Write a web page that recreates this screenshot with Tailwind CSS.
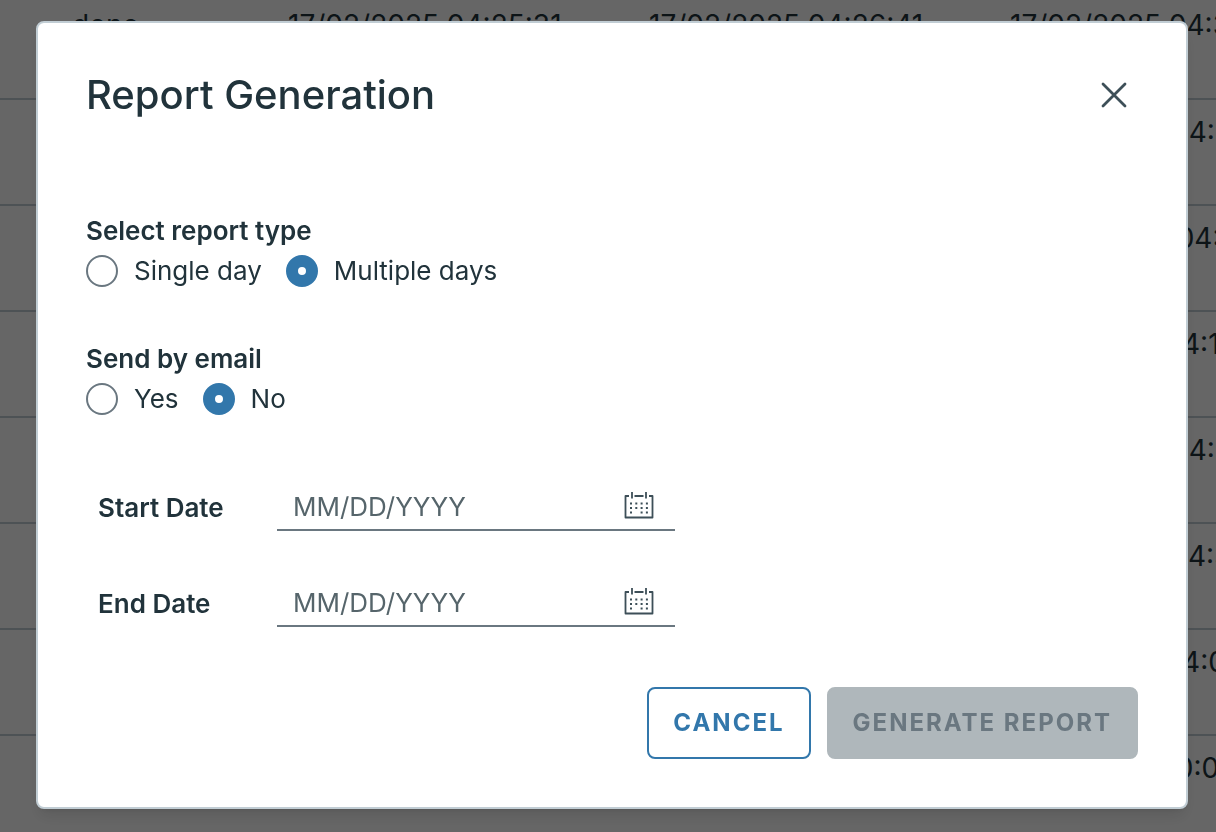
<!DOCTYPE html>
<html lang="en">
<head>
  <meta charset="UTF-8">
  <meta name="viewport" content="width=device-width, initial-scale=1.0">
  <title>Report Generation</title>
  <script src="https://cdn.jsdelivr.net/npm/@tailwindcss/browser@4"></script>
</head>
<body class="h-screen overflow-hidden bg-white font-['Inter',sans-serif] text-[26px] text-[#21333b]">

  <!-- Jobs table behind the dialog -->
  <div class="h-full overflow-hidden">
    <table class="-mt-[7px] w-[1400px] table-fixed text-left text-[28px] leading-8">
      <colgroup>
        <col class="w-[264px]"><col class="w-[361px]"><col class="w-[361px]"><col>
      </colgroup>
      <tbody id="jobs"></tbody>
    </table>
  </div>

  <!-- Report dialog -->
  <div class="fixed inset-0 flex items-start bg-black/60 pt-[21px] pr-7 pl-9">
    <div role="dialog" aria-modal="true" aria-labelledby="dialogTitle" class="w-full rounded-lg border-2 border-[#c1cdd4] bg-white p-12 shadow-lg">
      <div class="flex items-center justify-between">
        <h3 id="dialogTitle" class="text-[40px] leading-12 font-medium">Report Generation</h3>
        <button type="button" aria-label="Close" class="p-2 text-[#3d4f58]">
          <svg class="size-8" viewBox="0 0 32 32" fill="none" stroke="currentColor" stroke-width="2.8" stroke-linecap="round">
            <path d="M5 5l22 22M27 5l-22 22"/>
          </svg>
        </button>
      </div>

      <form onsubmit="return false">
        <fieldset class="mt-[94px]">
          <legend class="leading-9 font-semibold">Select report type</legend>
          <div class="mt-1 flex gap-6 leading-9">
            <label class="flex items-center gap-4">
              <input type="radio" name="type" value="single" class="size-8 appearance-none rounded-full border-2 border-[#6a7780] checked:border-[12px] checked:border-[#3277ab]">
              Single day
            </label>
            <label class="flex items-center gap-4">
              <input type="radio" name="type" value="multiple" checked class="size-8 appearance-none rounded-full border-2 border-[#6a7780] checked:border-[12px] checked:border-[#3277ab]">
              Multiple days
            </label>
          </div>
        </fieldset>

        <fieldset class="mt-13">
          <legend class="leading-9 font-semibold">Send by email</legend>
          <div class="mt-1 flex gap-6 leading-9">
            <label class="flex items-center gap-4">
              <input type="radio" name="email" value="yes" class="size-8 appearance-none rounded-full border-2 border-[#6a7780] checked:border-[12px] checked:border-[#3277ab]">
              Yes
            </label>
            <label class="flex items-center gap-4">
              <input type="radio" name="email" value="no" checked class="size-8 appearance-none rounded-full border-2 border-[#6a7780] checked:border-[12px] checked:border-[#3277ab]">
              No
            </label>
          </div>
        </fieldset>

        <div class="mt-[66px] grid grid-cols-[179px_398px] gap-y-12 pl-3">
          <label for="startDate" class="self-center font-semibold">Start Date</label>
          <div class="flex h-12 items-center border-b-2 border-[#6a7780] pr-5 pl-4">
            <input id="startDate" type="text" placeholder="MM/DD/YYYY" class="min-w-0 flex-1 outline-none placeholder:text-[#56656b]">
            <button type="button" aria-label="Pick start date" class="text-[#3d4f58]">
              <svg class="size-8" viewBox="0 0 32 32" fill="none" stroke="currentColor" stroke-width="1.8" stroke-linejoin="round">
                <path d="M6 6H2.500v21.500h27V6H26M11.500 6h9M9 2v6.500M23 2v6.500"/>
                <path stroke-width="2" stroke-dasharray="2 3.300" d="M7 13.500h18M7 18h18M7 22.500h2.500M17.600 22.500h7.400"/>
              </svg>
            </button>
          </div>
          <label for="endDate" class="self-center font-semibold">End Date</label>
          <div class="flex h-12 items-center border-b-2 border-[#6a7780] pr-5 pl-4">
            <input id="endDate" type="text" placeholder="MM/DD/YYYY" class="min-w-0 flex-1 outline-none placeholder:text-[#56656b]">
            <button type="button" aria-label="Pick end date" class="text-[#3d4f58]">
              <svg class="size-8" viewBox="0 0 32 32" fill="none" stroke="currentColor" stroke-width="1.8" stroke-linejoin="round">
                <path d="M6 6H2.500v21.500h27V6H26M11.500 6h9M9 2v6.500M23 2v6.500"/>
                <path stroke-width="2" stroke-dasharray="2 3.300" d="M7 13.500h18M7 18h18M7 22.500h2.500M17.600 22.500h7.400"/>
              </svg>
            </button>
          </div>
        </div>

        <div class="mt-[60px] flex justify-end gap-4 text-[24px] font-bold tracking-[2px]">
          <button type="button" class="h-18 rounded-lg border-2 border-[#3277ab] px-6 text-[#3277ab]">CANCEL</button>
          <button type="submit" disabled class="h-18 rounded-lg border-2 border-[#afb7bb] bg-[#afb7bb] px-6 text-[#6a7780]">GENERATE REPORT</button>
        </div>
      </form>
    </div>
  </div>

<script>
const jobs = [
  ['done', '17/02/2025 04:25:31', '17/02/2025 04:26:41', '17/02/2025 04:35:12'],
  ['done', '14/02/2025 04:25:31', '14/02/2025 04:26:41', '14/02/2025 04:35:12'],
  ['done', '06/02/2025 04:25:31', '06/02/2025 04:26:41', '06/02/2025 04:35:12'],
  ['done', '15/01/2025 04:05:31', '15/01/2025 04:06:41', '15/01/2025 04:15:12'],
  ['done', '14/02/2025 04:25:31', '14/02/2025 04:26:41', '14/02/2025 04:35:12'],
  ['done', '13/02/2025 04:25:31', '13/02/2025 04:26:41', '13/02/2025 04:35:12'],
  ['done', '12/01/2025 04:00:31', '12/01/2025 04:01:41', '12/01/2025 04:05:12'],
  ['done', '12/01/2025 10:00:31', '12/01/2025 10:01:41', '12/01/2025 10:05:12'],
];

document.getElementById('jobs').innerHTML = jobs.map((job, i) => `
  <tr class="h-[106px] align-top ${i < jobs.length - 1 ? 'border-b-2 border-[#c1cdd4]' : ''}">
    ${job.map((value, c) => `<td class="pt-4 whitespace-nowrap ${c === 0 ? 'pl-[72px]' : 'pl-6'}">${value}</td>`).join('')}
  </tr>
`).join('');
</script>
</body>
</html>
